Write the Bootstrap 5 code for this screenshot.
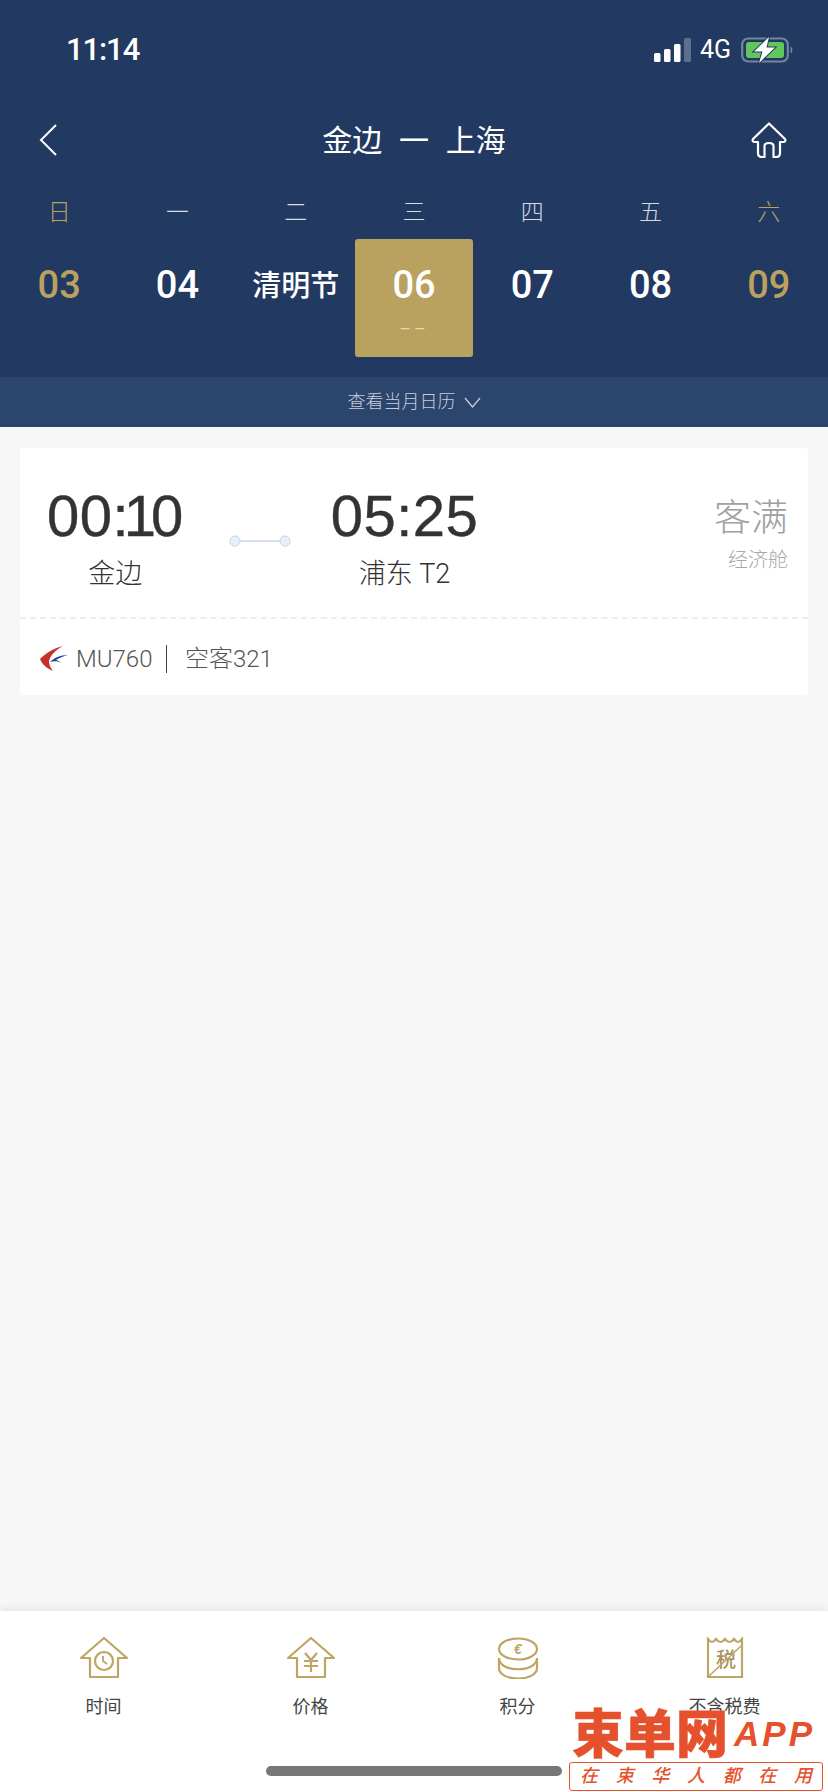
<!DOCTYPE html>
<html lang="zh-CN">
<head>
    <meta charset="UTF-8">
    <meta name="viewport" content="width=device-width, initial-scale=1.0">
    <title>航班查询</title>
    <link href="https://cdn.jsdelivr.net/npm/bootstrap@5.3.0/dist/css/bootstrap.min.css" rel="stylesheet">
    <style>
        body { background: #f7f7f7; font-family: "Liberation Sans", "Noto Sans CJK SC", sans-serif; width: 828px; height: 1792px; overflow: hidden; }
        .page-shell { height: 1792px; }
        .top-head { background: #223962; color: #fff; }
        .status-strip { height: 100px; padding: 0 34px 0 66px; }
        .clock-text { font-family: Roboto, sans-serif; font-weight: 500; font-size: 31px; letter-spacing: -1.1px; }
        .net-text { font-family: Roboto, sans-serif; font-size: 25px; margin: 0 10px 0 8px; }
        .nav-strip { height: 80px; padding: 0 41px 0 39px; }
        .nav-side { width: 36px; }
        .route-title { font-size: 30px; font-weight: 400; white-space: pre; padding-left: 2px; }
        .week-line { margin-top: 13px; }
        .week-cell { height: 39px; line-height: 39px; font-size: 23px; font-weight: 300; color: #d5dae3; }
        .gold-text { color: #b9a25f; }
        .day-line { margin-top: 7px; margin-bottom: 20px; }
        .day-cell { height: 118px; padding-top: 23px; font-family: Roboto, sans-serif; font-size: 38px; font-weight: 500; line-height: 46px; border-radius: 3px; }
        .day-cell.holiday-cell { font-family: "Noto Sans CJK SC", sans-serif; font-size: 29px; line-height: 42px; }
        .day-cell.on-day { background: #b9a25f; }
        .price-dash { font-size: 18px; line-height: 22px; font-weight: 400; color: #e6d8a8; margin-top: 10px; letter-spacing: 3px; }
        .month-strip { height: 50px; background: #2c456d; color: #c6cedb; font-size: 18px; font-weight: 300; }
        .flight-box { margin: 21px 20px 0; height: 247px; background: #fff; border-radius: 4px; }
        .flight-main { height: 171px; border-bottom: 2px dashed #eeeeee; padding: 10px 20px 0 27px; }
        .time-col { text-align: center; color: #333; }
        .time-big { font-size: 58px; line-height: 66px; margin-top: 1px; letter-spacing: .5px; -webkit-text-stroke: .4px #333; white-space: nowrap; }
        .tight-one { letter-spacing: -5px; }
        .place-name { font-family: Roboto, "Noto Sans CJK SC", sans-serif; font-size: 27px; line-height: 38px; font-weight: 300; margin-top: 6px; }
        .link-mark { margin: 7px 40px 0 45px; }
        .sold-side { margin-bottom: 8px; }
        .sold-text { font-size: 37px; line-height: 52px; font-weight: 300; color: #a0a0a0; }
        .cabin-text { font-size: 20px; line-height: 30px; font-weight: 300; color: #a8a8a8; }
        .flight-foot { font-family: Roboto, "Noto Sans CJK SC", sans-serif; height: 75px; padding: 4px 0 0 20px; font-size: 24px; font-weight: 300; color: #555; }
        .foot-split { width: 1.5px; height: 28px; background: #444; margin: 0 18px 0 13px; }
        .bottom-tabs { height: 181px; background: #fff; box-shadow: 0 -3px 8px rgba(0,0,0,.07); padding-top: 26px; }
        .tab-name { font-size: 18px; font-weight: 400; color: #444; margin-top: 15px; line-height: 26px; }
        .home-pill { position: absolute; left: 266px; top: 1766px; width: 296px; height: 10px; border-radius: 5px; background: #777; }
        .brand-stamp { position: absolute; left: 569px; top: 1702px; width: 254px; color: #e5512d; }
        .stamp-big { font-family: "Noto Sans CJK SC", sans-serif; font-size: 52px; line-height: 52px; font-weight: 900; margin-left: 3px; -webkit-text-stroke: .6px #e5512d; white-space: nowrap; }
        .stamp-app { font-family: "Liberation Sans", sans-serif; font-style: italic; font-weight: 700; font-size: 35px; letter-spacing: 3px; margin: 6px 0 0 6px; white-space: nowrap; }
        .stamp-line { height: 29px; margin-top: 1px; border: 1px solid #e5512d; border-radius: 3px; padding: 0 10px; font-size: 18px; font-style: italic; font-weight: 500; background: #fff; }
    </style>
</head>
<body>
<div class="page-shell d-flex flex-column position-relative">
    <!-- head -->
    <div class="top-head">
        <div class="status-strip d-flex align-items-center justify-content-between">
            <span class="clock-text">11:14</span>
            <div class="d-flex align-items-center">
                <svg width="38" height="24" viewBox="0 0 38 24"><rect x="0" y="15" width="6.5" height="9" rx="1.5" fill="#fff"/><rect x="10" y="11" width="6.5" height="13" rx="1.5" fill="#fff"/><rect x="20" y="6" width="6.5" height="18" rx="1.5" fill="#fff"/><rect x="30" y="0" width="7" height="24" rx="1.5" fill="#5c6f8f"/></svg>
                <span class="net-text">4G</span>
                <svg width="53" height="28" viewBox="0 0 53 28"><rect x="1.2" y="2.5" width="45.6" height="23" rx="6" fill="none" stroke="#76859f" stroke-width="2.2"/><rect x="5" y="6" width="38" height="16" rx="3" fill="#62c65c"/><path d="M49.5 10.5 C52 11.5 52 16.5 49.5 17.5Z" fill="#76859f"/><path d="M28 1 L13 15.5 H21.5 L18 27 L34 11.5 H25.5Z" fill="#fff" stroke="#223962" stroke-width="2" paint-order="stroke"/></svg>
            </div>
        </div>
        <div class="nav-strip d-flex align-items-center">
            <div class="nav-side"><svg class="d-block" width="18" height="32" viewBox="0 0 18 32"><path d="M17 1 L2 16 L17 31" fill="none" stroke="#fff" stroke-width="2"/></svg></div>
            <div class="flex-grow-1 text-center route-title">金边  一  上海</div>
            <div class="nav-side"><svg class="d-block" width="36" height="36" viewBox="0 0 36 36"><path d="M18 1.5 L2 17 C1 18.5 2 20 3.5 20 H7 V31 C7 33.5 8.5 35 11 35 H13.5 V24 C13.5 20 22.5 20 22.5 24 V35 H25 C27.5 35 29 33.5 29 31 V20 H32.5 C34 20 35 18.5 34 17Z" fill="none" stroke="#fff" stroke-width="2.2" stroke-linejoin="round"/></svg></div>
        </div>
        <div class="row g-0 text-center week-line">
            <div class="col week-cell gold-text">日</div>
            <div class="col week-cell">一</div>
            <div class="col week-cell">二</div>
            <div class="col week-cell">三</div>
            <div class="col week-cell">四</div>
            <div class="col week-cell">五</div>
            <div class="col week-cell gold-text">六</div>
        </div>
        <div class="row g-0 text-center day-line">
            <div class="col day-cell gold-text">03</div>
            <div class="col day-cell">04</div>
            <div class="col day-cell holiday-cell">清明节</div>
            <div class="col day-cell on-day">06<div class="price-dash">––</div></div>
            <div class="col day-cell">07</div>
            <div class="col day-cell">08</div>
            <div class="col day-cell gold-text">09</div>
        </div>
        <div class="month-strip d-flex align-items-center justify-content-center gap-2">
            <span>查看当月日历</span>
            <svg width="17" height="11" viewBox="0 0 17 11"><path d="M1 1 L8.5 10 L16 1" fill="none" stroke="#c6cedb" stroke-width="1.3"/></svg>
        </div>
    </div>

    <!-- flight card -->
    <div class="flight-box">
        <div class="flight-main d-flex align-items-center">
            <div class="time-col">
                <div class="time-big">00<span class="tight-one">:1</span>0</div>
                <div class="place-name">金边</div>
            </div>
            <svg class="link-mark" width="62" height="14" viewBox="0 0 62 14"><line x1="8" y1="7" x2="54" y2="7" stroke="#d5dfee" stroke-width="2"/><circle cx="6" cy="7" r="5" fill="#e9f0fb" stroke="#c5d4ea"/><circle cx="56" cy="7" r="5" fill="#e9f0fb" stroke="#c5d4ea"/></svg>
            <div class="time-col">
                <div class="time-big">05:25</div>
                <div class="place-name">浦东 T2</div>
            </div>
            <div class="ms-auto text-end sold-side">
                <div class="sold-text">客满</div>
                <div class="cabin-text">经济舱</div>
            </div>
        </div>
        <div class="flight-foot d-flex align-items-center">
            <svg class="me-2" width="28" height="25" viewBox="0 0 28 25"><path d="M23 0 C14 2 6 7 0 13 C2 18 6 22 13 25 C10 21 9 18 9 15 C11 8 16 4 23 0Z" fill="#c9302c"/><path d="M28 9 C20 9 14 12 10 16 C14 15 18 15 22 17 C19 15 17 14 16 14 C19 12 23 10 28 9Z" fill="#23408f"/></svg>
            <span>MU760</span>
            <span class="foot-split"></span>
            <span>空客321</span>
        </div>
    </div>

    <!-- tabs -->
    <div class="bottom-tabs row g-0 text-center mt-auto">
        <div class="col">
            <svg width="48" height="42" viewBox="0 0 48 42"><path d="M24 1 L1 21 H10 V40 H38 V21 H47Z" fill="none" stroke="#bda564" stroke-width="2.2" stroke-linejoin="round"/><circle cx="24" cy="24" r="9" fill="none" stroke="#bda564" stroke-width="2.2"/><path d="M23 19 V24 L27 27" fill="none" stroke="#bda564" stroke-width="1.8"/></svg>
            <div class="tab-name">时间</div>
        </div>
        <div class="col">
            <svg width="48" height="42" viewBox="0 0 48 42"><path d="M24 1 L1 21 H10 V40 H38 V21 H47Z" fill="none" stroke="#bda564" stroke-width="2.2" stroke-linejoin="round"/><path d="M18 16 L24 23 L30 16 M17 24 H31 M17 29 H31 M24 23 V35" fill="none" stroke="#bda564" stroke-width="2.2"/></svg>
            <div class="tab-name">价格</div>
        </div>
        <div class="col">
            <svg width="48" height="42" viewBox="0 0 48 42"><path d="M5 21 C5 36 43 36 43 21 M5 21 V31 C5 45 43 45 43 31 V21" fill="none" stroke="#bda564" stroke-width="2.2"/><ellipse cx="24" cy="12" rx="19" ry="10.5" fill="#fff" stroke="#bda564" stroke-width="2.2"/><text x="24" y="17" text-anchor="middle" font-size="14" font-weight="700" font-style="italic" fill="#bda564" font-family="Liberation Sans">€</text></svg>
            <div class="tab-name">积分</div>
        </div>
        <div class="col">
            <svg width="48" height="42" viewBox="0 0 48 42"><path d="M7 2 C10 6 12 6 15 2 C18 6 21 6 24 2 C27 6 30 6 33 2 C36 6 38 6 41 2 V40 H7Z" fill="none" stroke="#bda564" stroke-width="2.2"/><text x="25" y="30" text-anchor="middle" font-size="20" font-weight="500" fill="#a8955e" font-family="Noto Sans CJK SC">税</text><line x1="8" y1="39" x2="40" y2="9" stroke="#bda564" stroke-width="1.6"/></svg>
            <div class="tab-name">不含税费</div>
        </div>
    </div>

    <div class="home-pill"></div>
    <div class="brand-stamp">
        <div class="d-flex align-items-center flex-nowrap">
            <span class="stamp-big flex-shrink-0">束单网</span>
            <span class="stamp-app flex-shrink-0">APP</span>
        </div>
        <div class="stamp-line d-flex align-items-center justify-content-between">
            <span>在</span><span>束</span><span>华</span><span>人</span><span>都</span><span>在</span><span>用</span>
        </div>
    </div>
</div>
<script src="https://cdn.jsdelivr.net/npm/bootstrap@5.3.0/dist/js/bootstrap.bundle.min.js"></script>
</body>
</html>
